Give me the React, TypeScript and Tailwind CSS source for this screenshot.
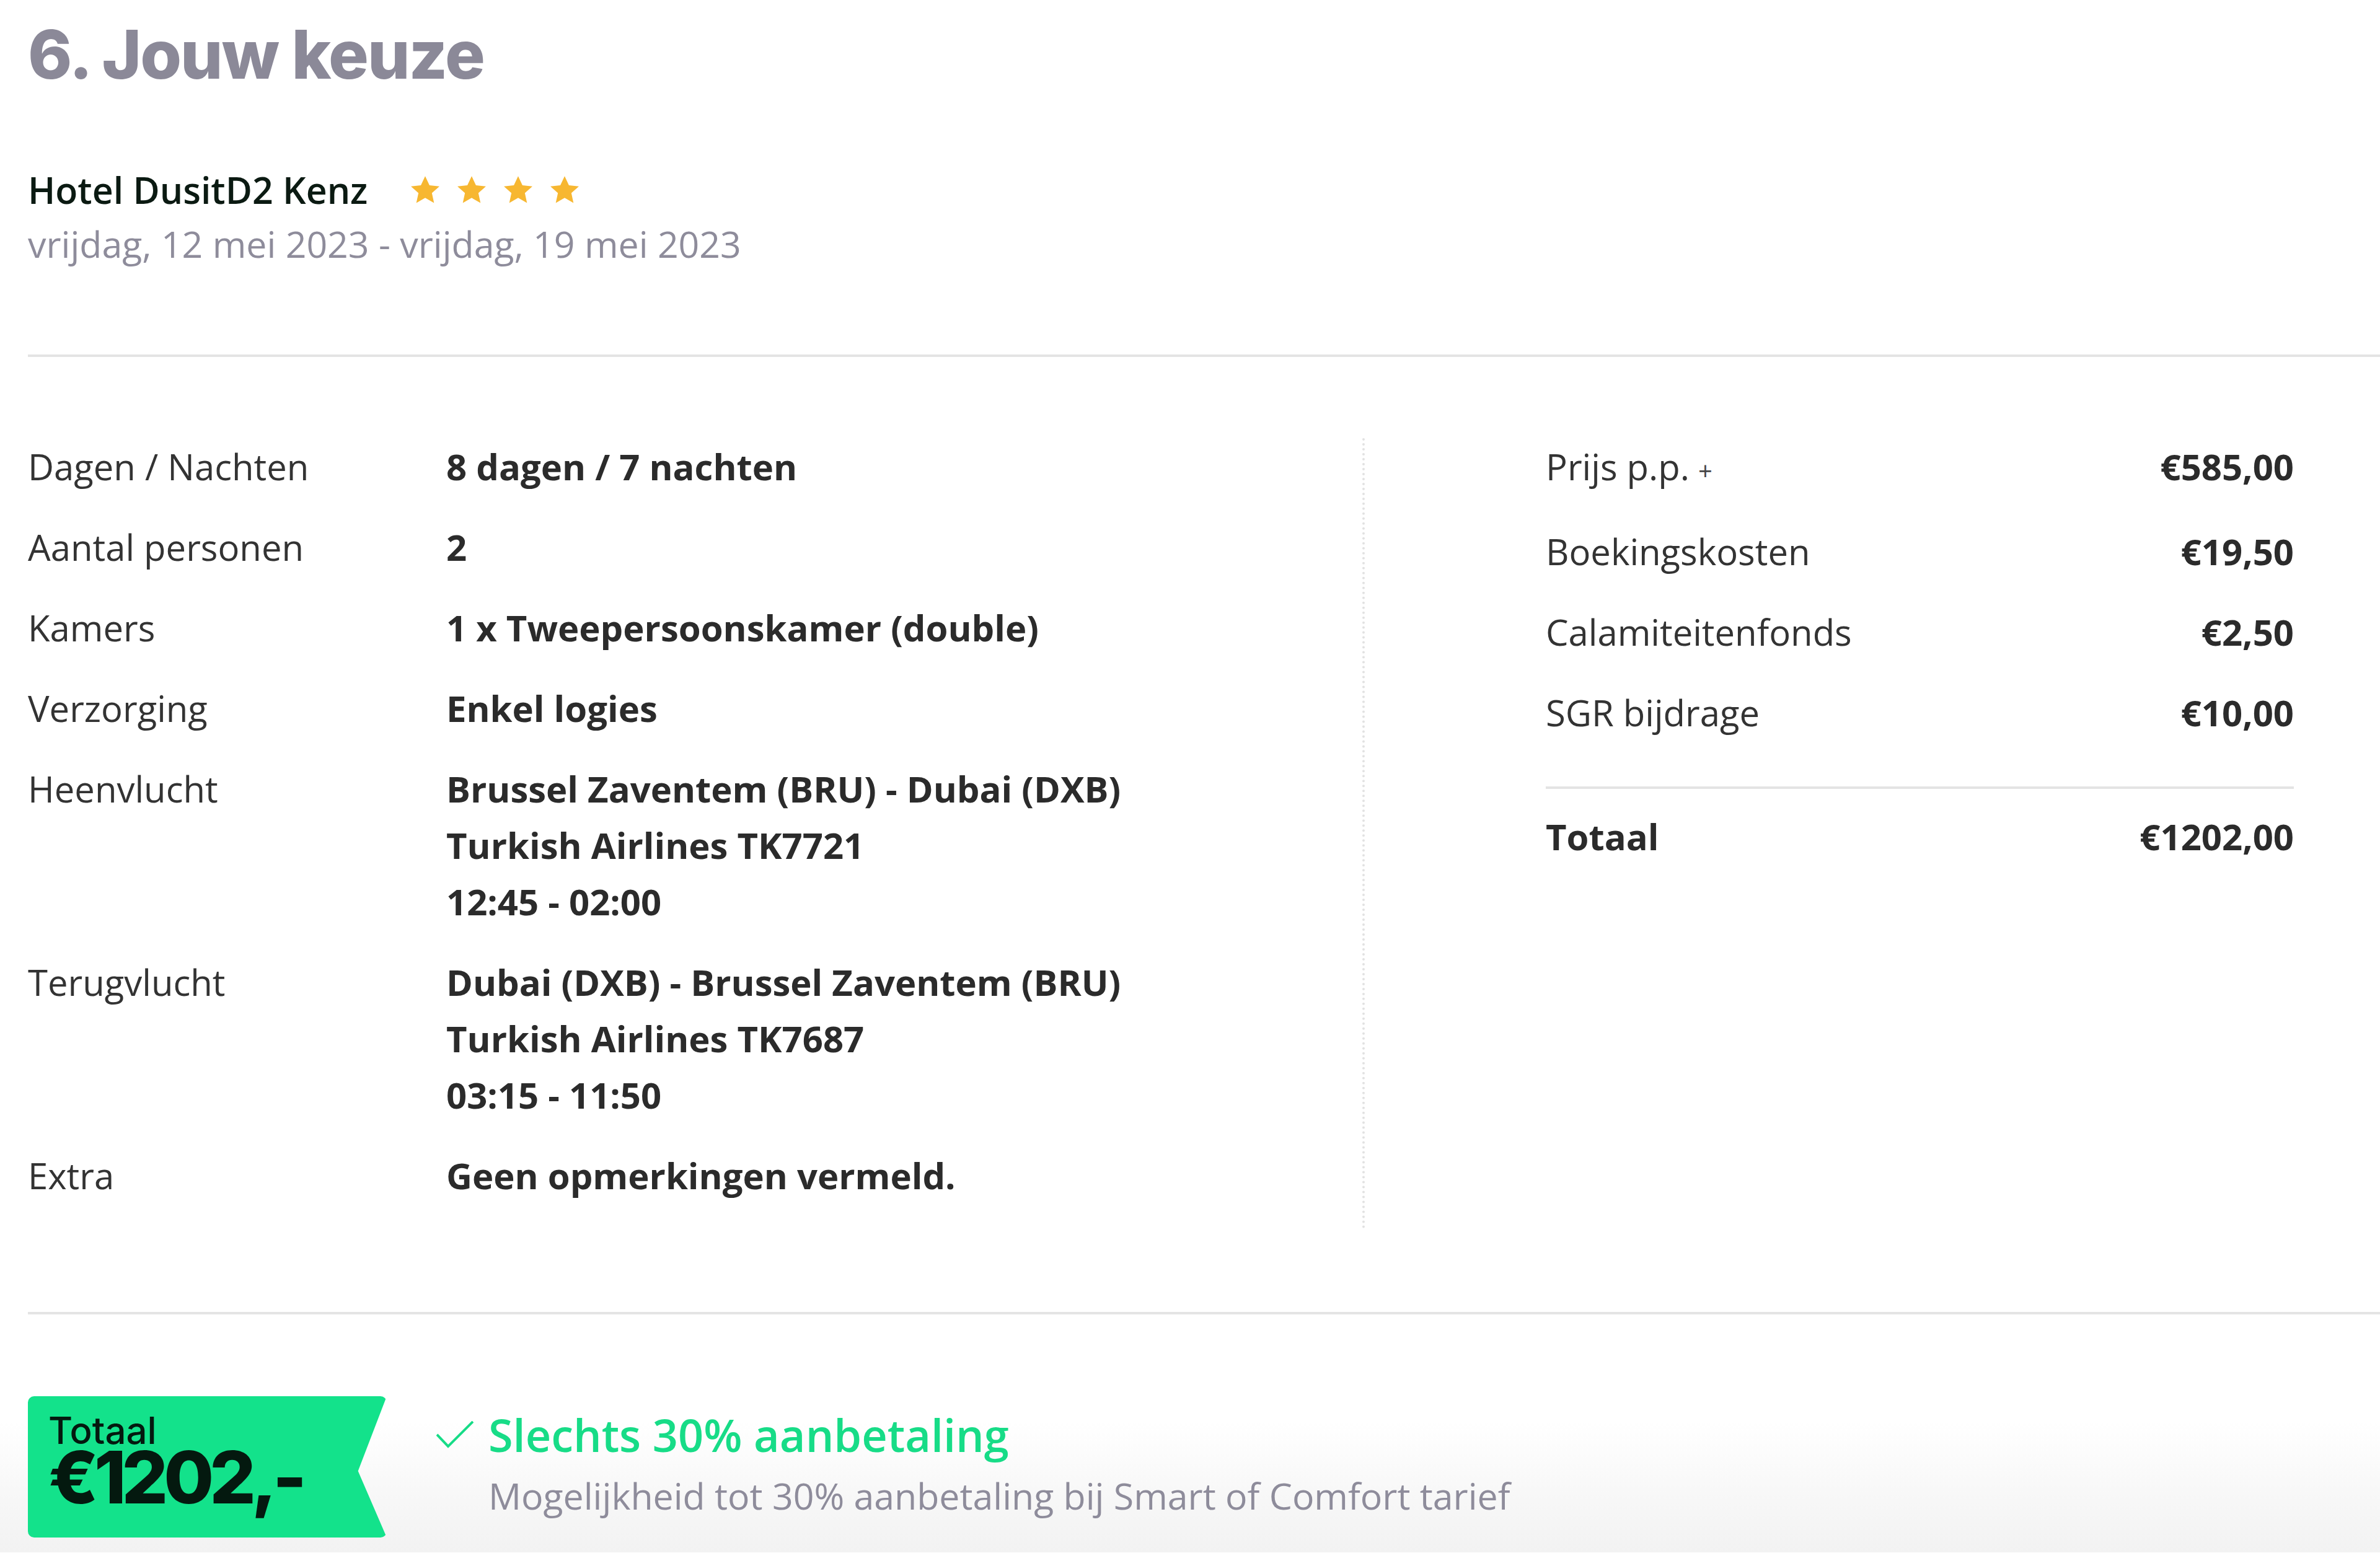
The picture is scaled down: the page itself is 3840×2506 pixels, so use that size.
import React from 'react';

const details = [
  { label: 'Dagen / Nachten', lines: ['8 dagen / 7 nachten'] },
  { label: 'Aantal personen', lines: ['2'] },
  { label: 'Kamers', lines: ['1 x Tweepersoonskamer (double)'] },
  { label: 'Verzorging', lines: ['Enkel logies'] },
  {
    label: 'Heenvlucht',
    lines: ['Brussel Zaventem (BRU) - Dubai (DXB)', 'Turkish Airlines TK7721', '12:45 - 02:00'],
  },
  {
    label: 'Terugvlucht',
    lines: ['Dubai (DXB) - Brussel Zaventem (BRU)', 'Turkish Airlines TK7687', '03:15 - 11:50'],
  },
  { label: 'Extra', lines: ['Geen opmerkingen vermeld.'] },
];

const prices = [
  { label: 'Prijs p.p.', plus: true, value: '€585,00' },
  { label: 'Boekingskosten', value: '€19,50' },
  { label: 'Calamiteitenfonds', value: '€2,50' },
  { label: 'SGR bijdrage', value: '€10,00' },
];

function Star() {
  return (
    <svg viewBox="0 0 24 24" className="w-[54px] h-[52px]">
      <polygon
        points="12,1.5 15.2,8.3 22.6,9.1 17,14.1 18.6,21.5 12,17.7 5.4,21.5 7,14.1 1.4,9.1 8.8,8.3"
        fill="#f7b731"
      />
    </svg>
  );
}

export default function App() {
  return (
    <div className="w-[3840px] h-[2506px] bg-white overflow-hidden font-['Open_Sans',sans-serif]">
      <div className="pl-[45px]">
        {/* heading */}
        <h1 className="pt-[34px] text-[108px] leading-none font-extrabold tracking-[-2px] text-[#8b8998] font-['Inter',sans-serif]">
          6. Jouw keuze
        </h1>

        {/* hotel */}
        <div className="mt-[121px] flex items-center">
          <span className="text-[59px] leading-[87px] font-semibold text-[#0b1a12]">Hotel DusitD2 Kenz</span>
          <div className="ml-[66px] flex gap-[21px]">
            <Star />
            <Star />
            <Star />
            <Star />
          </div>
        </div>
        <p className="text-[59px] leading-[87px] text-[#8e8c9b]">vrijdag, 12 mei 2023 - vrijdag, 19 mei 2023</p>

        <div className="mt-[135px] h-[4px] bg-[#e4e4e4]" />

        {/* details + prices */}
        <div className="mt-[131px] flex">
          <div className="w-[2153px] pb-[41px] flex flex-col gap-[39px]">
            {details.map((row) => (
              <div key={row.label} className="grid grid-cols-[675px_1fr] text-[58px] leading-[91px]">
                <span className="text-[#333333]">{row.label}</span>
                <div className="flex flex-col font-bold text-[#2b2b2b]">
                  {row.lines.map((l) => (
                    <span key={l}>{l}</span>
                  ))}
                </div>
              </div>
            ))}
          </div>

          <div className="border-l-4 border-dotted border-[#e2e2e2]" />

          <div className="flex-1 pl-[292px] pr-[139px]">
            <div className="flex flex-col gap-[39px]">
              {prices.map((p) => (
                <div key={p.label} className="flex justify-between text-[58px] leading-[91px]">
                  <span className="text-[#333333]">
                    {p.label}
                    {p.plus && <span className="ml-[14px] text-[40px] align-middle text-[#444444]">+</span>}
                  </span>
                  <span className="font-bold text-[#2b2b2b]">{p.value}</span>
                </div>
              ))}
            </div>
            <div className="mt-[74px] h-[4px] bg-[#e4e4e4]" />
            <div className="mt-[31px] flex justify-between text-[58px] leading-[91px] font-bold text-[#2b2b2b]">
              <span>Totaal</span>
              <span>€1202,00</span>
            </div>
          </div>
        </div>

        <div className="mt-[134px] h-[4px] bg-[#e4e4e4]" />
      </div>

      {/* total banner */}
      <div className="pl-[45px] pt-[132px] pb-[24px] bg-[linear-gradient(to_bottom,#ffffff_45%,#f2f2f2_100%)] flex">
        <div className="w-[579px] h-[228px] bg-[#13e28b] rounded-[10px] pl-[33px] pt-[31px] [clip-path:polygon(0_0,100%_0,92%_53%,100%_100%,0_100%)] font-['Inter',sans-serif] text-[#04190f]">
          <div className="text-[60px] leading-[48px] font-medium">Totaal</div>
          <div className="mt-[8px] text-[117px] leading-[88px] font-extrabold tracking-[-7px]">€1202,-</div>
        </div>

        <div className="ml-[80px] pt-[17px] flex flex-col">
          <div className="flex items-center gap-[24px]">
            <svg viewBox="0 0 60 44" className="w-[60px] h-[44px]" fill="none" stroke="#17dc87" strokeWidth="4">
              <polyline points="1,22 19,41 59,1" />
            </svg>
            <span className="text-[72px] leading-[90px] font-semibold text-[#17dc87]">Slechts 30% aanbetaling</span>
          </div>
          <p className="mt-[13px] pl-[84px] text-[59px] leading-[80px] text-[#8e8c9b]">
            Mogelijkheid tot 30% aanbetaling bij Smart of Comfort tarief
          </p>
        </div>
      </div>
    </div>
  );
}
